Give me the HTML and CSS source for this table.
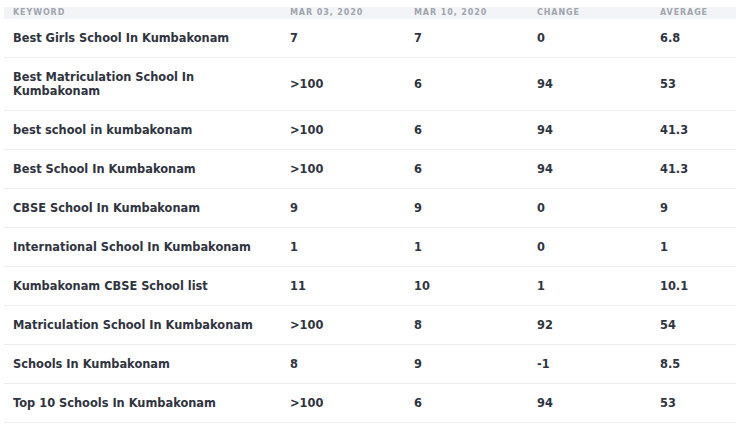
FILE: index.html
```html
<!DOCTYPE html>
<html>
<head>
<meta charset="utf-8">
<link rel="stylesheet" href="styles.css">
</head>
<body>
<div class="page">
  <h2 class="title">Keyword Ranking Comparison</h2>
  <table class="kw">
    <colgroup>
      <col class="c1"><col class="c2"><col class="c3"><col class="c4"><col class="c5">
    </colgroup>
    <thead>
      <tr><th>Keyword</th><th>Mar 03, 2020</th><th>Mar 10, 2020</th><th>Change</th><th>Average</th></tr>
    </thead>
    <tbody>
      <tr><td>Best Girls School In Kumbakonam</td><td>7</td><td>7</td><td>0</td><td>6.8</td></tr>
      <tr><td>Best Matriculation School In<br>Kumbakonam</td><td>&gt;100</td><td>6</td><td>94</td><td>53</td></tr>
      <tr><td>best school in kumbakonam</td><td>&gt;100</td><td>6</td><td>94</td><td>41.3</td></tr>
      <tr><td>Best School In Kumbakonam</td><td>&gt;100</td><td>6</td><td>94</td><td>41.3</td></tr>
      <tr><td>CBSE School In Kumbakonam</td><td>9</td><td>9</td><td>0</td><td>9</td></tr>
      <tr><td>International School In Kumbakonam</td><td>1</td><td>1</td><td>0</td><td>1</td></tr>
      <tr><td>Kumbakonam CBSE School list</td><td>11</td><td>10</td><td>1</td><td>10.1</td></tr>
      <tr><td>Matriculation School In Kumbakonam</td><td>&gt;100</td><td>8</td><td>92</td><td>54</td></tr>
      <tr><td>Schools In Kumbakonam</td><td>8</td><td>9</td><td>-1</td><td>8.5</td></tr>
      <tr><td>Top 10 Schools In Kumbakonam</td><td>&gt;100</td><td>6</td><td>94</td><td>53</td></tr>
    </tbody>
  </table>
</div>
</body>
</html>
```

FILE: styles.css
```css
html, body {
  margin: 0;
  padding: 0;
  background: #ffffff;
}
body {
  font-family: "DejaVu Sans", sans-serif;
  overflow: hidden;
}
.page {
  padding-left: 4px;
  margin-top: -18px;
}
.title {
  margin: 0 0 7px 9px;
  font-size: 15px;
  line-height: 18px;
  font-weight: bold;
  color: #2d3340;
}
.kw {
  width: 732px;
  border-collapse: collapse;
  table-layout: fixed;
}
.c1 { width: 277px; }
.c2 { width: 124px; }
.c3 { width: 123px; }
.c4 { width: 123px; }
.kw th {
  background: #f3f4f7;
  color: #a0a5b0;
  font-size: 8px;
  font-weight: bold;
  letter-spacing: 0.9px;
  text-transform: uppercase;
  text-align: left;
  height: 12px;
  padding: 0 0 0 9px;
  line-height: 12px;
}
.kw td {
  font-size: 11.4px;
  font-weight: bold;
  color: #2f3440;
  text-align: left;
  vertical-align: middle;
  padding: 12px 0 12px 9px;
  line-height: 14px;
  border-bottom: 1px solid #eceef1;
}
```
